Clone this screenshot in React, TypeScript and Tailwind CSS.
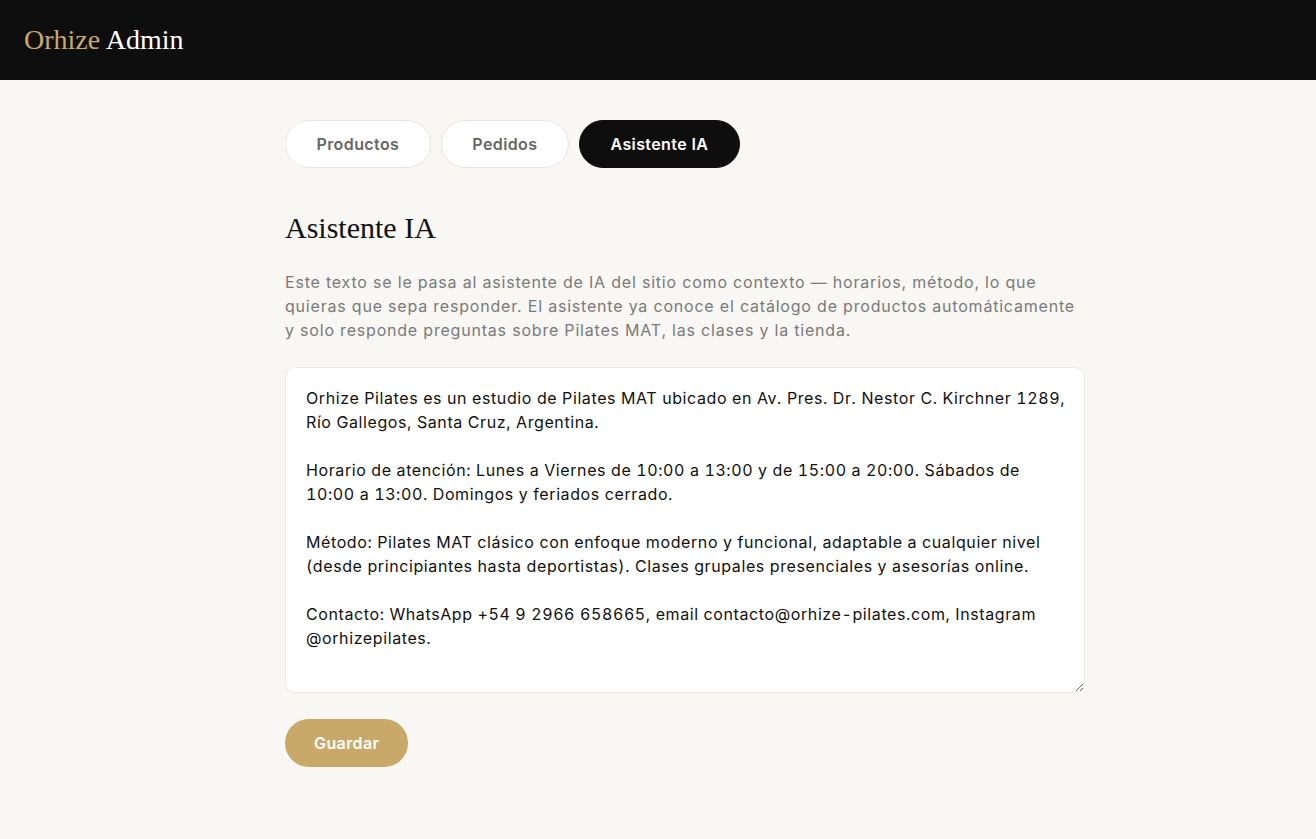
import { useState } from 'react'

const tabs = ['Productos', 'Pedidos', 'Asistente IA']

const initialContext = `Orhize Pilates es un estudio de Pilates MAT ubicado en Av. Pres. Dr. Nestor C. Kirchner 1289, Río Gallegos, Santa Cruz, Argentina.

Horario de atención: Lunes a Viernes de 10:00 a 13:00 y de 15:00 a 20:00. Sábados de 10:00 a 13:00. Domingos y feriados cerrado.

Método: Pilates MAT clásico con enfoque moderno y funcional, adaptable a cualquier nivel (desde principiantes hasta deportistas). Clases grupales presenciales y asesorías online.

Contacto: WhatsApp +54 9 2966 658665, email contacto@orhize-pilates.com, Instagram @orhizepilates.`

const serif = { fontFamily: '"Liberation Serif", "DejaVu Serif", serif' }

export default function App() {
  const [active, setActive] = useState('Asistente IA')
  const [context, setContext] = useState(initialContext)

  return (
    <div className="min-h-[839px] bg-[#f8f7f4] font-['Inter',sans-serif]">
      <header className="h-20 bg-[#0e0e0e] px-6 flex items-center">
        <h1 className="text-[28px]" style={serif}>
          <span className="text-[#c9a96e]">Orhize</span>{' '}
          <span className="text-white">Admin</span>
        </h1>
      </header>

      <main className="pl-[285px] pt-10">
        <div className="w-[800px]">
          <div className="flex gap-[10px]">
            {tabs.map((t) => (
              <button
                key={t}
                onClick={() => setActive(t)}
                className={`h-12 px-[30.5px] rounded-full text-[16px] font-semibold tracking-[0.4px] border ${
                  active === t
                    ? 'bg-[#0e0e0e] text-white border-[#0e0e0e]'
                    : 'bg-white text-[#666] border-[#e8e6e1]'
                }`}
              >
                {t}
              </button>
            ))}
          </div>

          <h2 className="mt-[40px] text-[30px] leading-[40px] text-[#111]" style={serif}>
            Asistente IA
          </h2>

          <p className="mt-[22px] text-[16px] leading-6 text-[#7a7a7a] tracking-[0.8px]">
            Este texto se le pasa al asistente de IA del sitio como contexto — horarios, método, lo que
            quieras que sepa responder. El asistente ya conoce el catálogo de productos automáticamente
            y solo responde preguntas sobre Pilates MAT, las clases y la tienda.
          </p>

          <textarea
            value={context}
            onChange={(e) => setContext(e.target.value)}
            className="mt-[25px] block w-full h-[326px] rounded-[10px] border border-[#ebe9e4] bg-white pl-5 pr-[18px] py-[18px] text-[16px] leading-6 text-[#111] tracking-[0.6px] tabular-nums outline-none resize-y"
          />

          <button className="mt-[26px] h-12 px-[29px] rounded-full bg-[#c9a96a] text-white text-[16px] font-semibold tracking-[0.4px]">
            Guardar
          </button>
        </div>
      </main>
    </div>
  )
}
